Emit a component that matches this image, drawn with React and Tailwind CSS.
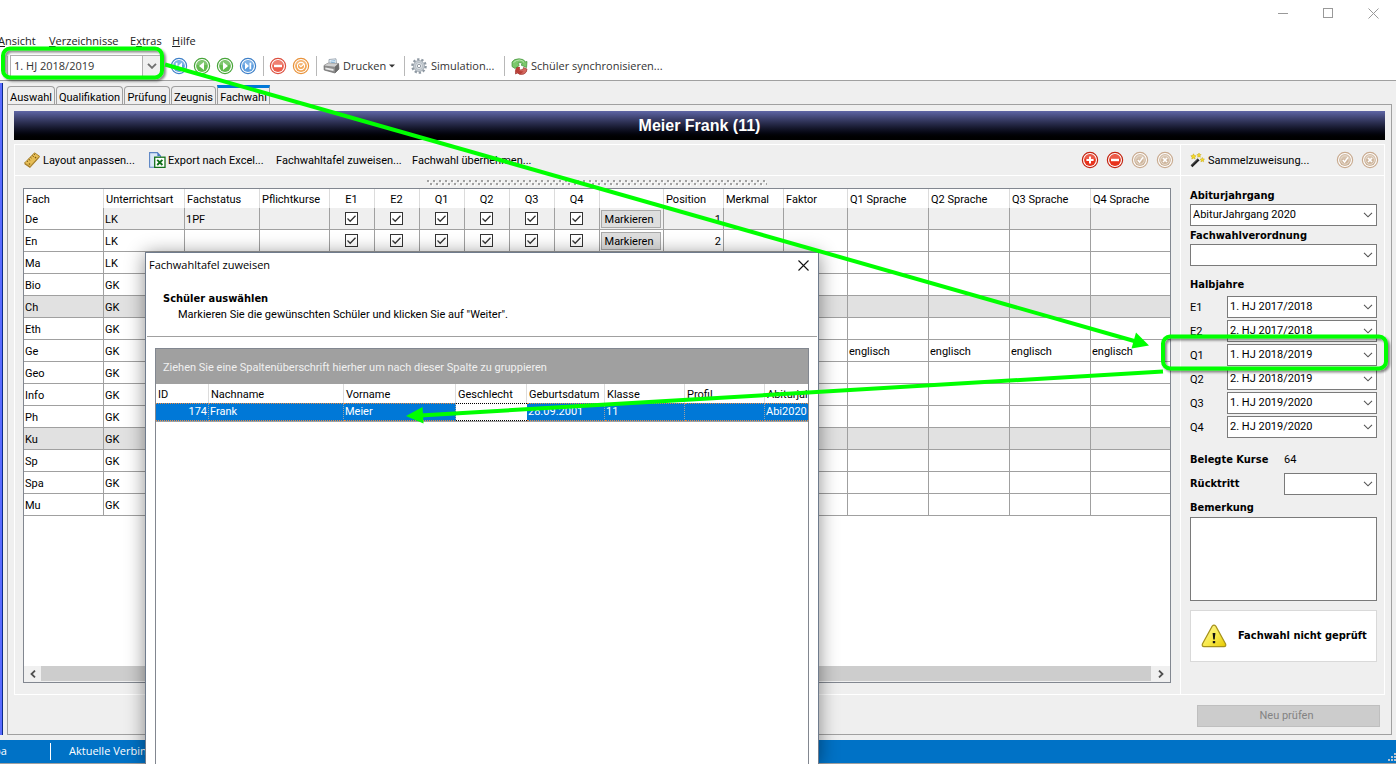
import React from "react";

const UI = "font-['Roboto','Liberation_Sans',sans-serif]";
const BOLD = "font-['DejaVu_Sans_Condensed','DejaVu_Sans',sans-serif] font-bold";
const SEGOE = "font-['Open_Sans','Noto_Sans',sans-serif]";

/* ---------- icons ---------- */

function RoundIcon({ color, dark, children }) {
  return (
    <svg width="18" height="18" viewBox="0 0 18 18" className="block">
      <circle cx="9" cy="9" r="7.6" fill="#fff" stroke={dark} strokeWidth="1.2" />
      <circle cx="9" cy="9" r="5.9" fill={color} />
      <path d="M3.600 7.500a5.600 5.600 0 0 1 10.800 0Q9 9.500 3.600 7.500z" fill="#fff" opacity=".2" />
      {children}
    </svg>
  );
}

const FirstIcon = () => (
  <RoundIcon color="#5f9fe0" dark="#3f80c8">
    <path d="M12 5.500 8 9l4 3.500zM5.800 5.800h1.700v6.400H5.800z" fill="#fff" />
  </RoundIcon>
);
const PrevIcon = () => (
  <RoundIcon color="#62bb4e" dark="#48a53a">
    <path d="M11 5 6 9l5 4z" fill="#fff" />
  </RoundIcon>
);
const NextIcon = () => (
  <RoundIcon color="#62bb4e" dark="#48a53a">
    <path d="M7 5l5 4-5 4z" fill="#fff" />
  </RoundIcon>
);
const LastIcon = () => (
  <RoundIcon color="#5f9fe0" dark="#3f80c8">
    <path d="M6 5.500 10 9l-4 3.500zM10.500 5.800h1.700v6.400h-1.700z" fill="#fff" />
  </RoundIcon>
);
const MinusIcon = ({ strong }) => (
  <RoundIcon color={strong ? "#e8331c" : "#ec5f4d"} dark={strong ? "#c2230f" : "#dc5040"}>
    <rect x="5" y="7.800" width="8" height="2.400" fill="#fff" />
  </RoundIcon>
);
const PlusIcon = () => (
  <RoundIcon color="#e8331c" dark="#c2230f">
    <path d="M5.400 9h7.200M9 5.400v7.200" stroke="#fff" strokeWidth="2" />
  </RoundIcon>
);
const ClockIcon = () => (
  <RoundIcon color="#f3a655" dark="#e8933c">
    <circle cx="9" cy="9" r="3.600" fill="none" stroke="#fff" strokeWidth="1.100" />
    <path d="M7.300 8.300 8.900 9.800 12 7" fill="none" stroke="#fff" strokeWidth="1.200" />
  </RoundIcon>
);
const CheckDim = () => (
  <RoundIcon color="#cdb49b" dark="#c9ab90">
    <circle cx="9" cy="9" r="4.200" fill="none" stroke="#eadfd3" strokeWidth=".9" />
    <path d="M6.800 9 8.600 11 12 6.400" fill="none" stroke="#fff" strokeWidth="1.500" />
  </RoundIcon>
);
const CrossDim = () => (
  <RoundIcon color="#cdb49b" dark="#c9ab90">
    <circle cx="9" cy="9" r="4.400" fill="none" stroke="#eadfd3" strokeWidth=".9" />
    <path d="M7 7l4 4M11 7l-4 4" stroke="#fff" strokeWidth="1.600" />
  </RoundIcon>
);

const PrinterIcon = () => (
  <svg width="17" height="16" viewBox="0 0 17 16" className="block shrink-0">
    <path d="M6 1.500 13 .8 13.500 6 6 7z" fill="#eef5fb" stroke="#8b98a5" strokeWidth=".8" />
    <path d="M7.500 3.200 12 2.600M7.600 4.800l4.600-.6" stroke="#7fb2d8" strokeWidth=".9" />
    <path d="M1 7.500 5 5.200l10.500.3.500 5.500-4 4L1.200 12z" fill="#8c8c8c" stroke="#666" strokeWidth=".7" />
    <path d="M1 7.500 5 5.200l10.500.3L12 8.800z" fill="#cfcfcf" />
    <path d="M12 8.800 15.500 5.500 16 11l-4 4z" fill="#6d6d6d" />
    <path d="M2.300 9.600l8.200 1.400v2l-8.200-1.800z" fill="#e9e9e9" />
  </svg>
);

const GearIcon = () => (
  <svg width="16" height="16" viewBox="0 0 16 16" className="block shrink-0">
    <circle cx="8" cy="8" r="6.600" fill="none" stroke="#8e98a2" strokeWidth="2.400" strokeDasharray="2.300 1.850" />
    <circle cx="8" cy="8" r="5.500" fill="#c9cfd5" stroke="#929ca5" strokeWidth=".7" />
    <circle cx="8" cy="8" r="3.500" fill="#e6eaed" stroke="#a5adb5" strokeWidth=".7" />
    <circle cx="8" cy="8" r="1.700" fill="#fff" stroke="#7c8690" strokeWidth=".8" />
  </svg>
);

const SyncIcon = () => (
  <svg width="17" height="17" viewBox="0 0 17 17" className="block shrink-0">
    <path d="M4.500 16Q4 10 7 9.500l2 2.500 3-.5.500-2 3.500 1.500q0 3.500-3 5-4 1.500-6.500-1z" fill="#d4685f" stroke="#9c3a33" strokeWidth=".7" />
    <path d="M5 8.500 9 9l-.5 4 4 .5-3.500 3-4.500-2.500z" fill="#b83f37" />
    <path d="M1 8.500V4Q3 .8 8 .8q4.500 0 6.500 3l1.500-.3-.5 6L10 7l1.500-1.300Q9.500 4 7 5l1.200 2.500L4 10.500z" fill="#7cc86c" stroke="#3f9136" strokeWidth=".7" />
    <path d="M2.500 4.500Q5 2 8.500 2q3 .2 4.500 2.300" fill="none" stroke="#b9e6ae" strokeWidth="1" />
  </svg>
);

const RulerIcon = () => (
  <svg width="16" height="16" viewBox="0 0 16 16" className="block shrink-0">
    <path d="M.5 11 10.500.8l5 3.400L6 14.800z" fill="#e6bd55" stroke="#9c741c" strokeWidth=".8" />
    <path d="M.5 11 6 14.800l9.500-10.600v1.200L6 16 .5 12.300z" fill="#a87c22" />
    <path d="M3 9l1 .7M4.700 7.200l1.500 1.100M6.500 5.400l1 .7M8.300 3.600l1.500 1.100M10 2l1 .7" stroke="#6d4d0c" strokeWidth=".9" />
    <circle cx="11.500" cy="5.600" r=".8" fill="#7a570f" />
    <circle cx="5.500" cy="12" r=".8" fill="#7a570f" />
  </svg>
);

const ExcelIcon = () => (
  <svg width="17" height="16" viewBox="0 0 17 16" className="block shrink-0">
    <path d="M.6.6h7.800L11.500 4v11.300H.6z" fill="#dbe8f8" stroke="#5b84c4" strokeWidth="1.100" />
    <path d="M8.400.6V4h3.100z" fill="#4577c4" />
    <rect x="5.700" y="5.200" width="10.300" height="10.200" fill="#fff" stroke="#12701a" strokeWidth="1.300" />
    <path d="M8.200 7.800l5.200 5.200M13.400 7.800l-5.200 5.200" stroke="#12701a" strokeWidth="1.900" />
  </svg>
);

const WandIcon = () => (
  <svg width="15" height="15" viewBox="0 0 15 15" className="block shrink-0">
    <path d="M1.500 13.200 9 6" stroke="#222" strokeWidth="2.600" />
    <path d="M1 12.300 7.600 6" stroke="#888" strokeWidth=".7" />
    <path d="M8.600 6.400 10.200 4.800" stroke="#eee" strokeWidth="2.400" />
    <path d="M3.500.8l.8 1.700 1.800.3-1.300 1.300.3 1.900-1.600-.9-1.700.9.3-1.900L.8 2.800l1.900-.3zM9 0l.6 1.400 1.500.2L10 2.700l.3 1.500L9 3.500l-1.300.7.2-1.500-1-1.100 1.500-.2zM12.300 4.500l.7 1.400 1.500.3-1.100 1 .2 1.600-1.300-.8-1.400.8.3-1.600-1.100-1 1.500-.3z" fill="#f5dc28" stroke="#c7a40c" strokeWidth=".5" />
  </svg>
);

const WarnIcon = () => (
  <svg width="26" height="24" viewBox="0 0 26 24" className="block shrink-0">
    <defs>
      <linearGradient id="warn" x1="0" y1="0" x2="1" y2="1">
        <stop offset="0" stopColor="#fdf7a0" />
        <stop offset=".55" stopColor="#f8e94a" />
        <stop offset="1" stopColor="#e6c800" />
      </linearGradient>
    </defs>
    <path d="M11.200 2.200Q13 .2 14.800 2.200L24.600 20q.8 2.500-1.600 2.700H3Q.6 22.500 1.400 20z" fill="url(#warn)" stroke="#a5911a" strokeWidth="1.200" />
    <path d="M11.600 9h2.800l-.7 6.500h-1.400z" fill="#111" />
    <rect x="11.800" y="17" width="2.400" height="2.300" rx=".6" fill="#111" />
  </svg>
);

const Chevron = ({ bold }) => (
  <svg
    width="10"
    height="6"
    viewBox="0 0 10 6"
    className="pointer-events-none col-start-1 row-start-1 mr-1 self-center justify-self-end"
  >
    <path d="M1 .8 5 4.800 9 .8" fill="none" stroke={bold ? "#707070" : "#555"} strokeWidth={bold ? 1.900 : 1.100} />
  </svg>
);

/* ---------- controls ---------- */

function Select({ id, label, value, className }) {
  return (
    <div className={"grid " + className}>
      <select
        id={id}
        aria-label={label}
        defaultValue={value}
        className="col-start-1 row-start-1 h-[22px] w-full appearance-none border border-[#7a7a7a] bg-white pl-0.5 text-[11px] text-black"
      >
        <option value={value}>{value}</option>
      </select>
      <Chevron />
    </div>
  );
}

function IconButton({ label, children }) {
  return (
    <button type="button" aria-label={label} className="flex h-5 w-5 items-center justify-center">
      {children}
    </button>
  );
}

function Check({ label }) {
  return (
    <label className="grid h-full w-full place-items-center">
      <input
        type="checkbox"
        defaultChecked
        aria-label={label}
        className="peer col-start-1 row-start-1 h-[13px] w-[13px] appearance-none border border-[#333] bg-white"
      />
      <svg
        width="13"
        height="13"
        viewBox="0 0 13 13"
        className="pointer-events-none invisible col-start-1 row-start-1 peer-checked:visible"
      >
        <path d="M2.500 6.500 5.200 9.200 10.500 3.700" fill="none" stroke="#333" strokeWidth="1.300" />
      </svg>
    </label>
  );
}

/* ---------- menu + toolbar ---------- */

function TitleBar() {
  return (
    <div className="flex h-[30px] items-start justify-end gap-[29px] bg-white pt-1 pr-[15px]">
      <button type="button" aria-label="Minimieren" className="flex h-[18px] w-4 items-center justify-center">
        <svg width="10" height="10" viewBox="0 0 10 10"><path d="M0 5.500h10" stroke="#999" /></svg>
      </button>
      <button type="button" aria-label="Maximieren" className="flex h-[18px] w-4 items-center justify-center">
        <svg width="10" height="10" viewBox="0 0 10 10"><rect x=".5" y=".5" width="9" height="9" fill="none" stroke="#999" /></svg>
      </button>
      <button type="button" aria-label="Schließen" className="flex h-[18px] w-4 items-center justify-center">
        <svg width="11" height="11" viewBox="0 0 11 11"><path d="M.5.5l10 10M10.500.5l-10 10" stroke="#999" /></svg>
      </button>
    </div>
  );
}

function Menu() {
  return (
    <nav className={"flex h-[22px] items-center gap-3 bg-white text-[11px] text-[#222] " + SEGOE}>
      <a href="#ansicht" className="-ml-0.5 w-[39px] whitespace-nowrap"><u>A</u>nsicht</a>
      <a href="#verzeichnisse" className="w-[69px] whitespace-nowrap"><u>V</u>erzeichnisse</a>
      <a href="#extras" className="w-[30px] whitespace-nowrap">E<u>x</u>tras</a>
      <a href="#hilfe" className="whitespace-nowrap"><u>H</u>ilfe</a>
    </nav>
  );
}

const Sep = () => <span className="h-5 w-px shrink-0 bg-[#b8b8b8]" />;

function Toolbar() {
  return (
    <div className={"flex h-[29px] items-center border-b border-[#a0a0a0] bg-white text-[11px] text-[#333] " + SEGOE}>
      <span className="ml-[7px] h-5 w-px bg-[#b8b8b8]" />
      <div className="ml-0.5 grid w-[151px]">
        <select
          aria-label="Halbjahr"
          defaultValue="1. HJ 2018/2019"
          className="col-start-1 row-start-1 h-[22px] w-full appearance-none border border-[#b0b0b0] bg-white pl-[3px] text-[11px]"
        >
          <option>1. HJ 2018/2019</option>
        </select>
        <span className="pointer-events-none col-start-1 row-start-1 my-px mr-px w-[18px] justify-self-end border-l border-[#b0b0b0] bg-[#f0f0f0]" />
        <Chevron bold />
      </div>
      <div className="ml-2 flex gap-[3px]">
        <IconButton label="Erster"><FirstIcon /></IconButton>
        <IconButton label="Vorheriger"><PrevIcon /></IconButton>
        <IconButton label="Nächster"><NextIcon /></IconButton>
        <IconButton label="Letzter"><LastIcon /></IconButton>
      </div>
      <div className="flex items-center pr-1 pl-[5px]"><Sep /></div>
      <div className="flex gap-[3px]">
        <IconButton label="Löschen"><MinusIcon /></IconButton>
        <IconButton label="Aktualisieren"><ClockIcon /></IconButton>
      </div>
      <div className="flex items-center pr-1.5 pl-[5px]"><Sep /></div>
      <button type="button" className="flex w-[75px] items-center gap-[3px] whitespace-nowrap">
        <PrinterIcon />
        Drucken
        <svg width="6" height="4" viewBox="0 0 6 4" className="shrink-0"><path d="M0 .5h6L3 3.500z" fill="#333" /></svg>
      </button>
      <div className="flex items-center px-1.5"><Sep /></div>
      <button type="button" className="flex w-[87px] items-center gap-1 whitespace-nowrap"><GearIcon />Simulation...</button>
      <div className="flex items-center px-1.5"><Sep /></div>
      <button type="button" className="flex items-center gap-[3px] whitespace-nowrap"><SyncIcon />Schüler synchronisieren...</button>
    </div>
  );
}

function Tabs() {
  const tabs = [
    ["Auswahl", "w-[48px]"],
    ["Qualifikation", "w-[67px]"],
    ["Prüfung", "w-[46px]"],
    ["Zeugnis", "w-[45px]"],
  ];
  return (
    <div role="tablist" className="flex items-end gap-px">
      {tabs.map(([t, w]) => (
        <button
          key={t}
          role="tab"
          type="button"
          className={"h-[18px] rounded-t-sm border border-b-0 border-[#a0a0a0] pt-1 text-center text-[11px] leading-3 whitespace-nowrap " + w}
        >
          {t}
        </button>
      ))}
      <button
        role="tab"
        type="button"
        aria-selected="true"
        className="-mb-px h-5 w-[53px] border border-t-[3px] border-b-0 border-[#a0a0a0] border-t-[#0078d7] bg-[#efefef] pt-0.5 text-center text-[11px] leading-3 whitespace-nowrap"
      >
        Fachwahl
      </button>
    </div>
  );
}

/* ---------- subject grid ---------- */

const HALF = ["E1", "E2", "Q1", "Q2", "Q3", "Q4"];
const SUBJECTS = [
  ["De", "LK"], ["En", "LK"], ["Ma", "LK"], ["Bio", "GK"], ["Ch", "GK"], ["Eth", "GK"], ["Ge", "GK"],
  ["Geo", "GK"], ["Info", "GK"], ["Ph", "GK"], ["Ku", "GK"], ["Sp", "GK"], ["Spa", "GK"], ["Mu", "GK"],
];
const SHADED = ["Ch", "Ku"];

function SubjectGrid() {
  const th = "border-r border-[#dcdcdc] pt-0.5 pl-0.5 text-left font-normal whitespace-nowrap last:border-r-0";
  const td = "h-[22px] border-r border-b border-[#a0a0a0] pl-px pr-0.5 whitespace-nowrap last:border-r-0";
  return (
    <div className="flex min-h-[494px] flex-1 flex-col overflow-hidden border border-[#828790] bg-white">
      <table className="w-full table-fixed border-separate border-spacing-0 text-[11px] leading-4">
        <colgroup>
          <col className="w-[80px]" />
          <col className="w-[81px]" />
          <col className="w-[75px]" />
          <col className="w-[70px]" />
          {HALF.map((h) => <col key={h} className="w-[45px]" />)}
          <col className="w-[64px]" />
          <col className="w-[60px]" />
          <col className="w-[60px]" />
          <col className="w-[64px]" />
          <col className="w-[81px]" />
          <col className="w-[81px]" />
          <col className="w-[81px]" />
          <col />
        </colgroup>
        <thead>
          <tr className="h-[19px]">
            {["Fach", "Unterrichtsart", "Fachstatus", "Pflichtkurse"].map((h) => <th key={h} className={th}>{h}</th>)}
            {HALF.map((h) => <th key={h} className="border-r border-[#dcdcdc] pt-0.5 pr-px text-center font-normal">{h}</th>)}
            <th className={th} aria-label="Aktion" />
            {["Position", "Merkmal", "Faktor", "Q1 Sprache", "Q2 Sprache", "Q3 Sprache", "Q4 Sprache"].map((h) => (
              <th key={h} className={th}>{h}</th>
            ))}
          </tr>
        </thead>
        <tbody>
          {SUBJECTS.map(([name, art], i) => {
            const bg = SHADED.includes(name) ? " bg-[#e1e1e1]" : i === 0 ? " bg-[#efefef]" : "";
            const first = SHADED.includes(name) ? " bg-[#e1e1e1]" : "";
            const text = td + " pt-0.5";
            const lang = name === "Ge" ? "englisch" : "";
            return (
              <tr key={name}>
                <td className={text + first}>{name}</td>
                <td className={text + bg}>{art}</td>
                <td className={text + bg}>{i === 0 ? "1PF" : ""}</td>
                <td className={text + bg} />
                {HALF.map((h) => (
                  <td key={h} className={"h-[22px] border-r border-b border-[#a0a0a0] pr-0.5" + bg}>
                    <Check label={name + " " + h} />
                  </td>
                ))}
                <td className={td + bg}>
                  <button type="button" className="block h-[18px] w-full border border-[#a9a9a9] bg-[#dedede] pt-px pr-1 text-center leading-4">
                    Markieren
                  </button>
                </td>
                <td className={text + " text-right" + bg}>{i + 1}</td>
                <td className={text + bg} />
                <td className={text + bg} />
                <td className={text + bg}>{lang}</td>
                <td className={text + bg}>{lang}</td>
                <td className={text + bg}>{lang}</td>
                <td className={text + bg}>{lang}</td>
              </tr>
            );
          })}
        </tbody>
      </table>
      <div className="mt-auto flex h-4 bg-[#f0f0f0]">
        <button type="button" aria-label="Nach links" className="flex w-[17px] items-center justify-center">
          <svg width="6" height="8" viewBox="0 0 6 8"><path d="M5 .6 1.500 4 5 7.400" fill="none" stroke="#505050" strokeWidth="1.800" /></svg>
        </button>
        <div className="mb-px flex-1 bg-[#cdcdcd]" />
        <button type="button" aria-label="Nach rechts" className="flex w-[19px] items-center justify-center">
          <svg width="6" height="8" viewBox="0 0 6 8"><path d="M1 .6 4.500 4 1 7.400" fill="none" stroke="#505050" strokeWidth="1.800" /></svg>
        </button>
      </div>
    </div>
  );
}

function MainPanel() {
  return (
    <section className="flex min-w-0 flex-1 flex-col border border-r-0 border-white">
      <div className="flex h-[31px] shrink-0 items-center border-b border-white px-[9px] text-[11px]">
        <button type="button" className="flex w-[125px] items-center gap-[3px] whitespace-nowrap"><RulerIcon /><span className="pt-0.5">Layout anpassen...</span></button>
        <button type="button" className="flex w-[127px] items-center gap-0.5 whitespace-nowrap"><ExcelIcon /><span className="pt-0.5">Export nach Excel...</span></button>
        <button type="button" className="w-[136px] pt-0.5 text-left whitespace-nowrap">Fachwahltafel zuweisen...</button>
        <button type="button" className="pt-0.5 text-left whitespace-nowrap">Fachwahl übernehmen...</button>
        <div className="-mr-1 ml-auto flex gap-[5px]">
          <IconButton label="Hinzufügen"><PlusIcon /></IconButton>
          <IconButton label="Entfernen"><MinusIcon strong /></IconButton>
          <IconButton label="Übernehmen"><CheckDim /></IconButton>
          <IconButton label="Verwerfen"><CrossDim /></IconButton>
        </div>
      </div>
      <div className="flex flex-1 flex-col pr-[9px] pb-[11px] pl-2">
        <div className="flex h-3 items-end justify-center pb-0.5">
          <svg width="340" height="6" className="block">
            <defs>
              <pattern id="grip" width="6" height="6" patternUnits="userSpaceOnUse">
                <rect width="2" height="2" fill="#a0a0a0" />
                <rect x="2" y="1" width="1" height="2" fill="#fff" />
                <rect x="3" y="3" width="2" height="2" fill="#a0a0a0" />
                <rect x="5" y="4" width="1" height="2" fill="#fff" />
              </pattern>
            </defs>
            <rect width="340" height="6" fill="url(#grip)" />
          </svg>
        </div>
        <SubjectGrid />
      </div>
    </section>
  );
}

/* ---------- sidebar ---------- */

const TERMS = [
  ["E1", "1. HJ 2017/2018"], ["E2", "2. HJ 2017/2018"], ["Q1", "1. HJ 2018/2019"],
  ["Q2", "2. HJ 2018/2019"], ["Q3", "1. HJ 2019/2020"], ["Q4", "2. HJ 2019/2020"],
];

function Sidebar() {
  const label = "block text-[11px] leading-4 " + BOLD;
  return (
    <aside className="flex w-[205px] shrink-0 flex-col border border-white text-[11px]">
      <div className="flex h-[31px] shrink-0 items-center border-b border-white pr-1 pl-[9px]">
        <button type="button" className="flex items-center gap-[3px] whitespace-nowrap"><WandIcon /><span className="pt-0.5">Sammelzuweisung...</span></button>
        <div className="ml-auto flex gap-[5px]">
          <IconButton label="Zuweisung übernehmen"><CheckDim /></IconButton>
          <IconButton label="Zuweisung verwerfen"><CrossDim /></IconButton>
        </div>
      </div>
      <div className="flex flex-1 flex-col pt-3 pr-[7px] pl-[9px]">
        <label htmlFor="abi" className={label}>Abiturjahrgang</label>
        <Select id="abi" value="AbiturJahrgang 2020" className="" />
        <label htmlFor="vo" className={label + " mt-0.5"}>Fachwahlverordnung</label>
        <Select id="vo" value="" className="" />
        <h2 className={label + " mt-[11px]"}>Halbjahre</h2>
        <div className="mt-[3px] flex flex-col gap-0.5">
          {TERMS.map(([k, v]) => (
            <div key={k} className="flex items-center">
              <label htmlFor={"t" + k} className="w-[37px] pt-0.5">{k}</label>
              <Select id={"t" + k} value={v} className="flex-1" />
            </div>
          ))}
        </div>
        <div className="mt-2.5 flex h-6 items-center">
          <span className={label + " w-[94px]"}>Belegte Kurse</span>
          <span>64</span>
        </div>
        <div className="flex h-6 items-center">
          <label htmlFor="rt" className={label + " w-[94px]"}>Rücktritt</label>
          <Select id="rt" value="" className="flex-1" />
        </div>
        <label htmlFor="bem" className={label + " mt-1"}>Bemerkung</label>
        <textarea id="bem" className="mt-px block h-[84px] resize-none border border-[#7a7a7a] bg-white" />
        <div className="mt-[9px] flex h-[52px] items-center gap-[11px] border border-[#d9d9d9] bg-white pl-2.5">
          <WarnIcon />
          <span className={"text-[11px] whitespace-nowrap " + BOLD}>Fachwahl nicht geprüft</span>
        </div>
      </div>
    </aside>
  );
}

/* ---------- dialog ---------- */

function Dialog() {
  const th = "border-r border-[#dcdcdc] pt-0.5 pl-0.5 text-left font-normal whitespace-nowrap overflow-hidden last:border-r-0";
  const td =
    "border-y border-r border-dotted border-y-[#f08a3c] border-r-[#a0a0a0] bg-[#0078d7] px-px text-white whitespace-nowrap overflow-hidden last:border-r-0";
  return (
    <div
      role="dialog"
      aria-labelledby="dlg"
      className="absolute top-[252px] bottom-0 left-[145px] flex w-[674px] flex-col border border-b-0 border-[#6f7b8c] bg-white shadow-[0_2px_18px_rgba(0,0,0,0.45)]"
    >
      <div className="flex h-6 shrink-0 items-center justify-between pr-[7px] pl-[3px]">
        <h1 id="dlg" className={"text-[11px] text-black " + SEGOE}>Fachwahltafel zuweisen</h1>
        <button type="button" aria-label="Schließen" className="flex h-4 w-4 items-center justify-center">
          <svg width="11" height="11" viewBox="0 0 11 11"><path d="M.5.5l10 10M10.500.5l-10 10" stroke="#111" strokeWidth="1.100" /></svg>
        </button>
      </div>
      <div className="mx-px h-[60px] shrink-0 border-b border-[#a0a0a0] pt-3.5 pl-4">
        <h2 className={"text-[11px] leading-4 " + BOLD}>Schüler auswählen</h2>
        <p className="pl-[15px] text-[11px] leading-4">Markieren Sie die gewünschten Schüler und klicken Sie auf "Weiter".</p>
      </div>
      <div className="mx-[9px] mt-[11px] flex-1 border border-b-0 border-[#828790]">
        <div className="flex h-[35px] items-center bg-[#a0a0a0] pt-1 pl-[7px] text-[11px] text-[#f0f0f0]">
          Ziehen Sie eine Spaltenüberschrift hierher um nach dieser Spalte zu gruppieren
        </div>
        <table className="w-full table-fixed border-separate border-spacing-0 border-b border-[#a0a0a0] text-[11px] leading-4">
          <colgroup>
            <col className="w-[53px]" />
            <col className="w-[135px]" />
            <col className="w-[112px]" />
            <col className="w-[71px]" />
            <col className="w-[78px]" />
            <col className="w-[80px]" />
            <col className="w-[80px]" />
            <col />
          </colgroup>
          <thead>
            <tr className="h-[19px]">
              {["ID", "Nachname", "Vorname", "Geschlecht", "Geburtsdatum", "Klasse", "Profil", "Abiturjahrgang"].map((h) => (
                <th key={h} className={th}>{h}</th>
              ))}
            </tr>
          </thead>
          <tbody>
            <tr className="h-[18px]">
              <td className={td + " text-right"}>174</td>
              <td className={td}>Frank</td>
              <td className={td}>Meier</td>
              <td className="border-y border-dotted border-black bg-white" />
              <td className={td}>28.09.2001</td>
              <td className={td}>11</td>
              <td className={td} />
              <td className={td}>Abi2020</td>
            </tr>
          </tbody>
        </table>
      </div>
    </div>
  );
}

/* ---------- annotations lying over the window ---------- */

function Annotations() {
  return (
    <svg width="1396" height="764" viewBox="0 0 1396 764" className="pointer-events-none absolute top-0 left-0" aria-hidden="true">
      <defs>
        <filter id="soft" x="-10%" y="-20%" width="120%" height="150%">
          <feDropShadow dx="2" dy="2" stdDeviation="1.200" floodColor="#000" floodOpacity=".45" />
        </filter>
      </defs>
      <g fill="none" stroke="#00ff00" strokeWidth="4">
        <rect x="3" y="48.500" width="159" height="29" rx="7" filter="url(#soft)" />
        <rect x="1163" y="336.500" width="223" height="32" rx="7" filter="url(#soft)" />
        <path d="M165 64.500 1136 341.500" />
        <path d="M1163 371.500 420 415.500" />
      </g>
      <path d="M1149 345.500 1131.500 348.500 1136 332.500z" fill="#00ff00" />
      <path d="M406 416 422.500 407 423.500 423.500z" fill="#00ff00" />
    </svg>
  );
}

export default function App() {
  return (
    <div className={"relative flex min-h-screen w-full flex-col overflow-hidden bg-[#efefef] text-black " + UI}>
      <TitleBar />
      <Menu />
      <Toolbar />
      <main className="flex flex-1 pr-1 pb-[5px]">
        <div className="mt-0.5 w-[3px] shrink-0 border-r border-[#0a2a8c] bg-[#5b6cff]" />
        <div className="ml-1 flex min-w-0 flex-1 flex-col pt-1">
          <Tabs />
          <div className="flex flex-1 flex-col border border-[#a0a0a0] px-1.5 pt-1.5 pb-[7px]">
            <header className="flex h-[29px] shrink-0 items-center justify-center bg-linear-to-b from-[#5f66a6] to-black font-['Liberation_Sans',Arial,sans-serif] text-base font-bold text-white">
              Meier Frank (11)
            </header>
            <div className="mt-1 flex flex-1">
              <MainPanel />
              <Sidebar />
            </div>
            <button
              type="button"
              disabled
              className="mt-2.5 mr-[5px] flex h-[22px] w-[183px] shrink-0 items-center justify-center self-end border border-[#bfbfbf] bg-[#cccccc] pr-1 text-[11px] text-[#838383]"
            >
              Neu prüfen
            </button>
          </div>
        </div>
      </main>
      <footer className={"flex h-6 shrink-0 items-center border-b border-[#a0a0a0] bg-[#0072c6] text-[11px] text-white " + SEGOE}>
        <span className="-ml-1.5 w-14">pa</span>
        <span className="h-[17px] w-px bg-white" />
        <span className="ml-[18px]">Aktuelle Verbindung</span>
        <svg width="8" height="8" viewBox="0 0 8 8" className="mt-auto mb-0.5 ml-auto">
          <path d="M6 0h2v2H6zM3 3h2v2H3zM6 3h2v2H6zM0 6h2v2H0zM3 6h2v2H3zM6 6h2v2H6z" fill="#b9c4d0" />
        </svg>
      </footer>
      <Dialog />
      <Annotations />
    </div>
  );
}
